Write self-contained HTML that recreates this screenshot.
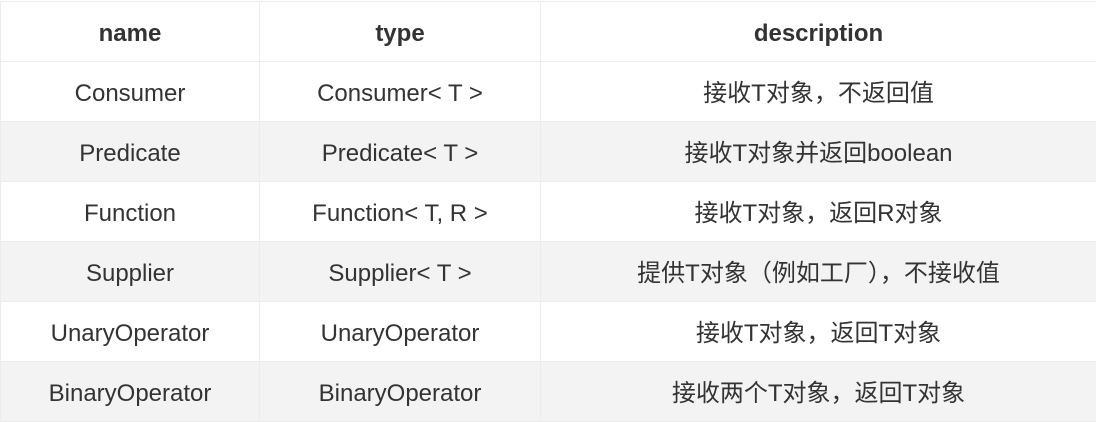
<!DOCTYPE html>
<html><head><meta charset="utf-8"><style>
body{margin:0;background:#fff;}
table{border-collapse:collapse;position:absolute;left:0;top:1px;width:1097px;table-layout:fixed;font-family:"Liberation Sans","Noto Sans CJK SC",sans-serif;font-size:24px;color:#333;}
td,th{border:1px solid #ececec;height:60px;padding:5px 0 0 0;box-sizing:border-box;text-align:center;line-height:30px;}
th{font-weight:bold;}
tr:nth-child(odd) td{background:#f3f3f3;}
</style></head><body>
<table>
<colgroup><col style="width:259px"><col style="width:281px"><col></colgroup>
<tr><th>name</th><th>type</th><th>description</th></tr>
<tr><td>Consumer</td><td>Consumer&lt; T &gt;</td><td>接收T对象，不返回值</td></tr>
<tr><td>Predicate</td><td>Predicate&lt; T &gt;</td><td>接收T对象并返回boolean</td></tr>
<tr><td>Function</td><td>Function&lt; T, R &gt;</td><td>接收T对象，返回R对象</td></tr>
<tr><td>Supplier</td><td>Supplier&lt; T &gt;</td><td>提供T对象（例如工厂），不接收值</td></tr>
<tr><td>UnaryOperator</td><td>UnaryOperator</td><td>接收T对象，返回T对象</td></tr>
<tr><td>BinaryOperator</td><td>BinaryOperator</td><td>接收两个T对象，返回T对象</td></tr>
</table>
</body></html>
